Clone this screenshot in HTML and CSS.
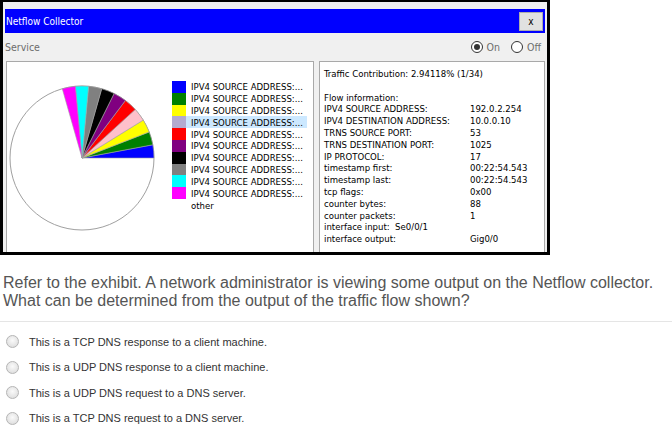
FILE: index.html
```html
<!DOCTYPE html>
<html lang="en">
<head>
  <meta charset="UTF-8" />
  <title>Netflow Question</title>
  <link rel="stylesheet" href="styles.css">
</head>
<body>

  <!-- Exhibit: Netflow collector window -->
  <div class="window">
    <div class="titlebar">
      <span>Netflow Collector</span>
      <div class="close">x</div>
    </div>

    <div class="service">
      <span>Service</span>
      <div class="toggle">
        <span class="dot on"></span><span>On</span>
        <span class="dot"></span><span>Off</span>
      </div>
    </div>

    <div class="panels">
      <div class="panel chart">
        <svg class="pie" width="150" height="150" viewBox="0 0 150 150">
          <circle cx="75" cy="75" r="72" fill="#fff" stroke="#a0a0a0" stroke-width="1"/>
          <g stroke="#a0a0a0" stroke-width="0.6">
            <path d="M75 75 L147 75 A72 72 0 0 0 145.77 61.77 Z" fill="#0000ff"/>
            <path d="M75 75 L145.77 61.77 A72 72 0 0 0 142.14 48.99 Z" fill="#008000"/>
            <path d="M75 75 L142.14 48.99 A72 72 0 0 0 136.21 37.10 Z" fill="#ffff00"/>
            <path d="M75 75 L136.21 37.10 A72 72 0 0 0 128.21 26.49 Z" fill="#ffc0cb"/>
            <path d="M75 75 L128.21 26.49 A72 72 0 0 0 118.39 17.54 Z" fill="#ff0000"/>
            <path d="M75 75 L118.39 17.54 A72 72 0 0 0 107.09 10.55 Z" fill="#800080"/>
            <path d="M75 75 L107.09 10.55 A72 72 0 0 0 94.71 5.75 Z" fill="#000000"/>
            <path d="M75 75 L94.71 5.75 A72 72 0 0 0 81.64 3.31 Z" fill="#808080"/>
            <path d="M75 75 L81.64 3.31 A72 72 0 0 0 68.36 3.31 Z" fill="#00ffff"/>
            <path d="M75 75 L68.36 3.31 A72 72 0 0 0 55.29 5.75 Z" fill="#ff00ff"/>
          </g>
        </svg>

        <ul class="legend">
          <li><i style="background:#0000ff"></i>IPV4 SOURCE ADDRESS:...</li>
          <li><i style="background:#008000"></i>IPV4 SOURCE ADDRESS:...</li>
          <li><i style="background:#ffff00"></i>IPV4 SOURCE ADDRESS:...</li>
          <li class="selected"><i style="background:#b3abd0"></i>IPV4 SOURCE ADDRESS:...</li>
          <li><i style="background:#ff0000"></i>IPV4 SOURCE ADDRESS:...</li>
          <li><i style="background:#800080"></i>IPV4 SOURCE ADDRESS:...</li>
          <li><i style="background:#000000"></i>IPV4 SOURCE ADDRESS:...</li>
          <li><i style="background:#808080"></i>IPV4 SOURCE ADDRESS:...</li>
          <li><i style="background:#00ffff"></i>IPV4 SOURCE ADDRESS:...</li>
          <li><i style="background:#ff00ff"></i>IPV4 SOURCE ADDRESS:...</li>
          <li class="other">other</li>
        </ul>
      </div>

      <div class="panel info">
        <p class="contrib">Traffic Contribution: 2.94118% (1/34)</p>
        <p>Flow information:</p>
        <div class="row"><span>IPV4 SOURCE ADDRESS:</span><span>192.0.2.254</span></div>
        <div class="row"><span>IPV4 DESTINATION ADDRESS:</span><span>10.0.0.10</span></div>
        <div class="row"><span>TRNS SOURCE PORT:</span><span>53</span></div>
        <div class="row"><span>TRNS DESTINATION PORT:</span><span>1025</span></div>
        <div class="row"><span>IP PROTOCOL:</span><span>17</span></div>
        <div class="row"><span>timestamp first:</span><span>00:22:54.543</span></div>
        <div class="row"><span>timestamp last:</span><span>00:22:54.543</span></div>
        <div class="row"><span>tcp flags:</span><span>0x00</span></div>
        <div class="row"><span>counter bytes:</span><span>88</span></div>
        <div class="row"><span>counter packets:</span><span>1</span></div>
        <p>interface input:&nbsp; Se0/0/1</p>
        <div class="row"><span>interface output:</span><span>Gig0/0</span></div>
      </div>
    </div>
  </div>

  <!-- Question -->
  <p class="question">Refer to the exhibit. A network administrator is viewing some output on the Netflow collector. What can be determined from the output of the traffic flow shown?</p>
  <hr>

  <ul class="answers">
    <li><span class="radio"></span>This is a TCP DNS response to a client machine.</li>
    <li><span class="radio"></span>This is a UDP DNS response to a client machine.</li>
    <li><span class="radio"></span>This is a UDP DNS request to a DNS server.</li>
    <li><span class="radio"></span>This is a TCP DNS request to a DNS server.</li>
  </ul>

</body>
</html>
```

FILE: styles.css
```css
body {
  margin: 0;
  background: #fff;
  font-family: "Liberation Sans", Arial, sans-serif;
}

/* exhibit window */
.window {
  width: 550px;
  height: 255px;
  box-sizing: border-box;
  border: 3px solid #000;
  border-top-width: 2px;
  background: #f0f0f0;
  padding: 7px 2px 0 2px;
  font-family: "DejaVu Sans Condensed", "DejaVu Sans", sans-serif;
  font-size: 9.5px;
  color: #000;
}

.titlebar {
  height: 24px;
  background: #0000ff;
  color: #fff;
  display: flex;
  align-items: center;
  justify-content: space-between;
  padding-left: 1px;
  font-size: 10px;
}

.close {
  width: 22px;
  height: 17px;
  margin-right: 2px;
  background: #e1e1e1;
  border: 1px solid #adadad;
  color: #000;
  font-size: 10px;
  display: flex;
  align-items: center;
  justify-content: center;
}

.service {
  height: 28px;
  display: flex;
  align-items: center;
  justify-content: space-between;
  color: #6d6d6d;
  font-size: 10.5px;
}

.toggle {
  display: flex;
  align-items: center;
  gap: 4px;
  padding-right: 4px;
}

.toggle span:nth-child(2) {
  margin-right: 7px;
}

.dot {
  width: 10px;
  height: 10px;
  border: 1px solid #333;
  border-radius: 50%;
  background: #fff;
  position: relative;
}

.dot.on::after {
  content: "";
  position: absolute;
  left: 2px;
  top: 2px;
  width: 6px;
  height: 6px;
  border-radius: 50%;
  background: #333;
}

.panels {
  display: flex;
  gap: 5px;
  padding-left: 1px;
  height: 191px;
}

.panel {
  background: #fff;
  border: 1px solid #a9a9a9;
  border-bottom: none;
  box-sizing: border-box;
}

.chart {
  width: 308px;
  display: flex;
  align-items: flex-start;
}

.pie {
  margin: 21px 0 0 0;
  flex-shrink: 0;
}

.legend {
  list-style: none;
  margin: 19px 0 0 15px;
  padding: 0;
}

.legend li {
  height: 11.8px;
  display: flex;
  align-items: center;
  white-space: nowrap;
  padding-right: 4px;
}

.legend li.selected {
  background: #cce8ff;
}

.legend i {
  width: 14px;
  height: 11.8px;
  margin-right: 5px;
}

.legend li.other {
  padding-left: 19px;
  height: 13px;
}

.info {
  flex: 1;
  padding: 6px 4px 0 4px;
  line-height: 11.8px;
}

.info p {
  margin: 0;
}

.info .contrib {
  margin-bottom: 11.8px;
}

.row {
  display: flex;
}

.row span:first-child {
  width: 146px;
}

/* question */
.question {
  margin: 19px 0 0 3px;
  font-size: 16px;
  line-height: 18px;
  color: #555;
  width: 665px;
}

hr {
  border: none;
  border-top: 1px solid #e5e5e5;
  margin: 11px 0 0 0;
}

.answers {
  list-style: none;
  margin: 7px 0 0 0;
  padding: 0;
}

.answers li {
  height: 25.5px;
  display: flex;
  align-items: center;
  font-size: 11px;
  color: #333;
}

.radio {
  width: 11px;
  height: 11px;
  border: 1px solid #b5b5b5;
  border-radius: 50%;
  background: radial-gradient(circle at 50% 40%, #fafafa 0%, #e2e2e2 70%, #d0d0d0 100%);
  margin: 0 10px 0 6px;
}
```
